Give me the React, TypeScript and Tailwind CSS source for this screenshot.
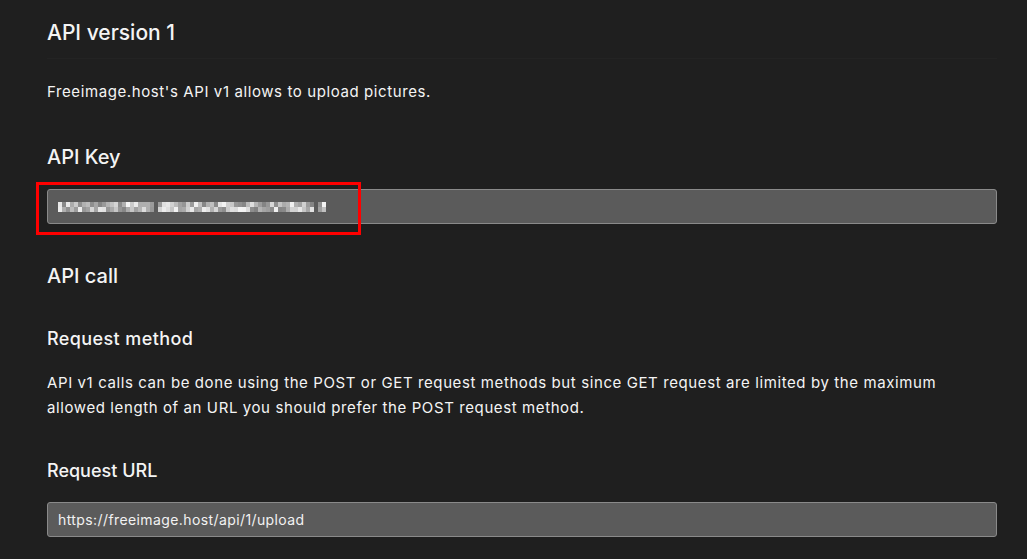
import React from "react";

// pixelated (censored) api key, built from a fixed seed so it looks the same each time
const mosaic = (() => {
  let s = 17;
  const rnd = () => {
    s = (s * 9301 + 49297) % 233280;
    return s / 233280;
  };
  const cols: { top: string; bottom: string; gap: boolean }[] = [];
  for (let i = 0; i < 67; i++) {
    const gap = i === 24 || i === 64;
    const shade = () => {
      const v = Math.round(130 + rnd() * 115);
      return `rgb(${v},${v},${v})`;
    };
    cols.push({ top: shade(), bottom: shade(), gap });
  }
  return cols;
})();

const Field = ({ children }: { children?: React.ReactNode }) => (
  <div className="h-[35px] w-full rounded-[3px] border border-[#8a8a8a] bg-[#5b5b5b] flex items-center px-[10px] text-[14px] tracking-[0.4px] text-[#f2f2f2]">
    {children}
  </div>
);

const App = () => {
  return (
    <div
      className="min-h-[559px] w-full bg-[#1f1f1f] text-[#f4f4f4] pl-[47px] pr-[30px] pt-[17px]"
      style={{ fontFamily: "Inter, 'Noto Sans', sans-serif" }}
    >
      <h1 className="text-[21px] leading-[32px] font-medium pb-[9px] border-b border-[#232323]">
        API version 1
      </h1>

      <p className="mt-[21px] text-[15px] leading-[24px] tracking-[0.6px]">
        Freeimage.host's API v1 allows to upload pictures.
      </p>

      <h2 className="mt-[39px] text-[20px] leading-[28px] font-medium">API Key</h2>

      <div className="relative mt-[18px]">
        <Field>
          <div className="flex flex-col">
            <div className="flex">
              {mosaic.map((c, i) => (
                <span
                  key={i}
                  className="w-[4px] h-[5px]"
                  style={{ background: c.gap ? "transparent" : c.top }}
                />
              ))}
            </div>
            <div className="flex">
              {mosaic.map((c, i) => (
                <span
                  key={i}
                  className="w-[4px] h-[5px]"
                  style={{ background: c.gap ? "transparent" : c.bottom }}
                />
              ))}
            </div>
          </div>
        </Field>
        {/* red highlight box drawn over the key */}
        <div className="absolute left-[-11px] top-[-7px] w-[325px] h-[53px] border-[3px] border-[#ff0000] pointer-events-none" />
      </div>

      <h2 className="mt-[38px] text-[20px] leading-[28px] font-medium">API call</h2>

      <h3 className="mt-[36px] text-[18px] leading-[26px] font-medium tracking-[0.4px]">
        Request method
      </h3>

      <p className="mt-[18px] text-[15px] leading-[25px] tracking-[0.6px] pr-[40px]">
        API v1 calls can be done using the POST or GET request methods but since GET request are
        limited by the maximum allowed length of an URL you should prefer the POST request method.
      </p>

      <h3 className="mt-[38px] text-[18px] leading-[26px] font-medium">Request URL</h3>

      <div className="mt-[18px]">
        <Field>https://freeimage.host/api/1/upload</Field>
      </div>
    </div>
  );
};

export default App;
